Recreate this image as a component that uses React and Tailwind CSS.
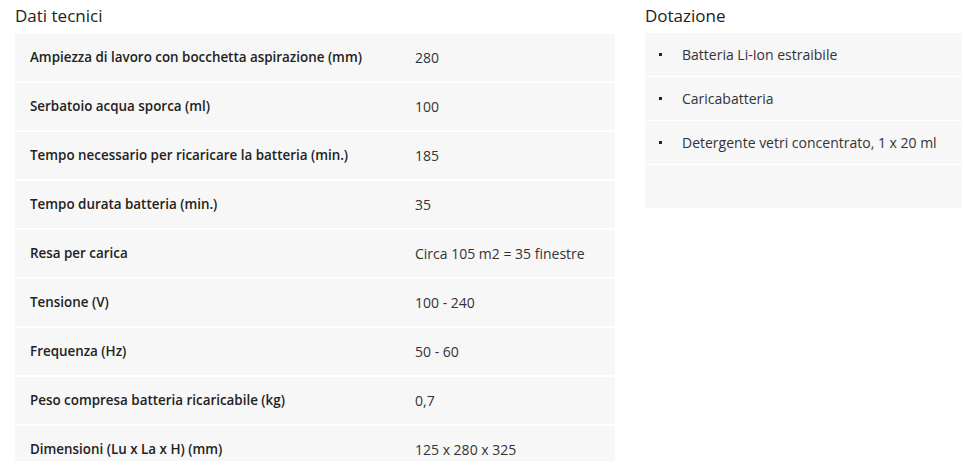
export default function App() {
  const specs = [
    ["Ampiezza di lavoro con bocchetta aspirazione (mm)", "280"],
    ["Serbatoio acqua sporca (ml)", "100"],
    ["Tempo necessario per ricaricare la batteria (min.)", "185"],
    ["Tempo durata batteria (min.)", "35"],
    ["Resa per carica", "Circa 105 m2 = 35 finestre"],
    ["Tensione (V)", "100 - 240"],
    ["Frequenza (Hz)", "50 - 60"],
    ["Peso compresa batteria ricaricabile (kg)", "0,7"],
    ["Dimensioni (Lu x La x H) (mm)", "125 x 280 x 325"],
  ];

  const items = [
    "Batteria Li-Ion estraibile",
    "Caricabatteria",
    "Detergente vetri concentrato, 1 x 20 ml",
  ];

  return (
    <div
      className="w-[962px] h-[461px] overflow-hidden bg-white text-[#222] flex"
      style={{ fontFamily: '"Open Sans", "Noto Sans", sans-serif' }}
    >
      {/* Dati tecnici */}
      <div className="w-[600px] ml-[15px] shrink-0">
        <h2 className="text-[17px] leading-[24px] mt-[4px] mb-[6px]">Dati tecnici</h2>
        <div className="flex flex-col gap-[2px]">
          {specs.map(([label, value]) => (
            <div key={label} className="h-[47px] bg-[#f7f7f7] flex items-center">
              <div className="w-[400px] pl-[15px] font-semibold text-[13.4px]">{label}</div>
              <div className="text-[14px] text-[#333]">{value}</div>
            </div>
          ))}
        </div>
      </div>

      {/* Dotazione */}
      <div className="ml-[30px] flex-1">
        <h2 className="text-[17px] leading-[24px] mt-[4px] mb-[5px]">Dotazione</h2>
        <div className="flex flex-col gap-[1px]">
          {items.map((item) => (
            <div key={item} className="h-[43px] bg-[#f7f7f7] flex items-center text-[14px] text-[#333]">
              <span className="w-[3px] h-[3px] bg-[#222] ml-[14px] mr-[20px]" />
              <span>{item}</span>
            </div>
          ))}
          <div className="h-[43px] bg-[#f7f7f7]" />
        </div>
      </div>
    </div>
  );
}
